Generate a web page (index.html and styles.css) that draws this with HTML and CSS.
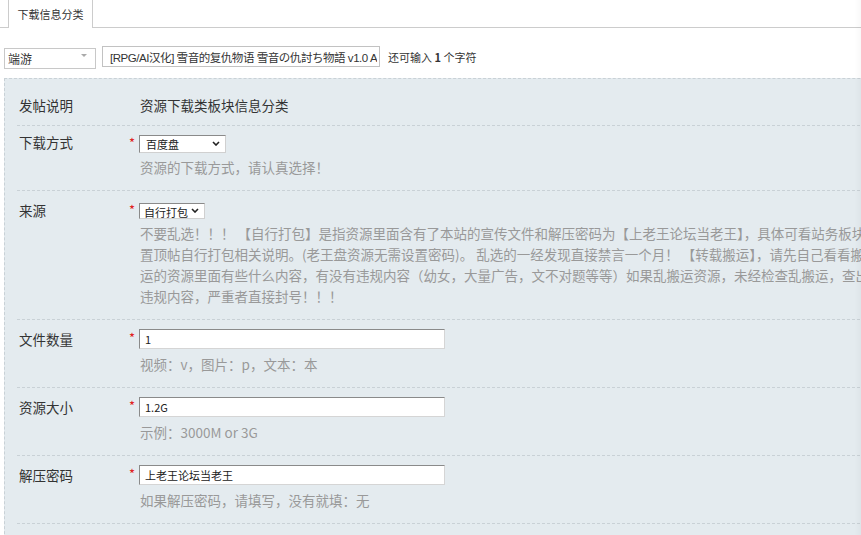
FILE: index.html
```html
<!DOCTYPE html>
<html>
<head>
    <meta charset="UTF-8">
    <meta name="viewport" content="width=device-width, initial-scale=1.0">
    <title>发帖 - 下载信息分类</title>
    <link rel="stylesheet" href="styles.css">
</head>
<body>
    <!-- 标签 -->
    <div class="tabbar">
        <a class="tab">下载信息分类</a>
    </div>

    <!-- 标题 -->
    <div class="subject">
        <span class="combo">
            <select>
                <option>端游</option>
            </select>
        </span>
        <input class="subject-input" type="text" value="[RPG/AI汉化] 雪音的复仇物语 雪音の仇討ち物語 v1.0 A">
        <span class="count">还可输入 <b>1</b> 个字符</span>
    </div>

    <!-- 分类信息 -->
    <div class="sort-panel">
        <div class="row row-intro">
            <div class="label">发帖说明</div>
            <div class="field">资源下载类板块信息分类</div>
        </div>

        <div class="row row-pick">
            <div class="label">下载方式</div>
            <span class="req">*</span>
            <span class="pick pick-md">
                <select><option>百度盘</option></select>
                <svg class="chev" width="8" height="5" viewBox="0 0 8 5"><path d="M1 1l3 3 3-3" fill="none" stroke="#222" stroke-width="1.6"/></svg>
            </span>
            <p class="tip">资源的下载方式，请认真选择！</p>
        </div>

        <div class="row row-pick row-source">
            <div class="label">来源</div>
            <span class="req">*</span>
            <span class="pick pick-sm">
                <select><option>自行打包</option></select>
                <svg class="chev" width="8" height="5" viewBox="0 0 8 5"><path d="M1 1l3 3 3-3" fill="none" stroke="#222" stroke-width="1.6"/></svg>
            </span>
            <p class="tip tip-long">不要乱选！！！ 【自行打包】是指资源里面含有了本站的宣传文件和解压密码为【上老王论坛当老王】，具体可看站务板块<br>置顶帖自行打包相关说明。(老王盘资源无需设置密码)。 乱选的一经发现直接禁言一个月！ 【转载搬运】，请先自己看看搬<br>运的资源里面有些什么内容，有没有违规内容（幼女，大量广告，文不对题等等）如果乱搬运资源，未经检查乱搬运，查出<br>违规内容，严重者直接封号！！！</p>
        </div>

        <div class="row">
            <div class="label">文件数量</div>
            <span class="req">*</span>
            <input class="text" type="text" value="1">
            <p class="tip">视频：v，图片：p，文本：本</p>
        </div>

        <div class="row">
            <div class="label">资源大小</div>
            <span class="req">*</span>
            <input class="text" type="text" value="1.2G">
            <p class="tip">示例：3000M or 3G</p>
        </div>

        <div class="row">
            <div class="label">解压密码</div>
            <span class="req">*</span>
            <input class="text" type="text" value="上老王论坛当老王">
            <p class="tip">如果解压密码，请填写，没有就填：无</p>
        </div>
    </div>

    <div class="edge"></div>
</body>
</html>
```

FILE: styles.css
```css
html,
body {
    overflow: hidden;
}

body {
    margin: 0;
    background-color: #FFF;
    color: #333;
    font-family: "Noto Sans CJK SC", "Noto Sans", sans-serif;
}

select,
input {
    font-family: inherit;
    color: #222;
    outline: none;
}

/* 标签 */

.tabbar {
    display: flex;
    height: 27px;
    padding-left: 8px;
    border-bottom: 1px solid #CCC;
}
.tab {
    box-sizing: border-box;
    width: 85px;
    height: 28px;
    border-left: 1px solid #CCC;
    border-right: 1px solid #CCC;
    background-color: #FFF;
    font-size: 11px;
    line-height: 28px;
    text-align: center;
    color: #333;
}

/* 标题 */

.subject {
    display: flex;
    align-items: center;
    height: 21px;
    margin: 18px 0 0 4px;
}
.combo {
    position: relative;
    display: inline-block;
}
.combo select {
    appearance: none;
    box-sizing: border-box;
    width: 92px;
    height: 21px;
    padding: 0 0 0 3px;
    border: 1px solid #C8C8C8;
    border-radius: 0;
    background-color: #FFF;
    font-size: 12px;
    color: #333;
}
.combo::after {
    content: "";
    position: absolute;
    top: 9px;
    right: 9px;
    border-left: 3px solid transparent;
    border-right: 3px solid transparent;
    border-top: 3px solid #AAA;
}
.subject-input {
    box-sizing: border-box;
    width: 278px;
    height: 21px;
    margin-left: 6px;
    padding: 0 2px 0 7px;
    border: 1px solid #C2C2C2;
    font-family: "Liberation Sans", "Noto Sans CJK SC", sans-serif;
    font-size: 11.5px;
    letter-spacing: -0.45px;
    color: #333;
}
.count {
    margin-left: 8px;
    font-size: 11px;
    color: #333;
}

/* 分类信息 */

.sort-panel {
    width: 1000px;
    margin: 11px 0 0 4px;
    border-top: 1px dashed #C9D1D6;
    border-left: 1px dashed #C9D1D6;
    background-color: #E4EBEF;
    padding-bottom: 40px;
}
.row {
    display: grid;
    grid-template-columns: 110px 10px 1fr;
    margin-left: 12px;
    padding: 9px 0 12px 2px;
    border-bottom: 1px dashed #C9D1D6;
    font-size: 13.5px;
}
.label {
    align-self: center;
    line-height: 20px;
    color: #333;
}
.row-intro {
    padding: 15px 0 9px 2px;
}
.row-intro .label,
.row-intro .field {
    line-height: 22px;
}
.row-intro .field {
    grid-column: 3;
    padding-left: 1px;
}
.req {
    align-self: center;
    margin-top: -3px;
    font-size: 13px;
    line-height: 16px;
    color: #E02020;
}
.tip {
    grid-column: 3;
    margin: 4px 0 0 1px;
    line-height: 22px;
    color: #999;
    white-space: nowrap;
}

/* 下拉 */

.pick {
    position: relative;
    justify-self: start;
}
.pick select {
    appearance: none;
    display: block;
    box-sizing: border-box;
    height: 18px;
    padding: 0 0 0 6px;
    border: 1px solid;
    border-color: #8A8A8A #D0D0D0 #D0D0D0 #8A8A8A;
    border-radius: 0;
    background-color: #FFF;
    font-size: 11px;
}
.pick-md select {
    width: 87px;
}
.pick-sm select {
    width: 66px;
}
.chev {
    position: absolute;
    top: 6px;
    right: 6px;
    pointer-events: none;
}
.row-pick .label {
    line-height: 18px;
    margin-top: -4px;
}
.row-pick .tip {
    margin-top: 3px;
}
.row-source {
    padding-top: 12px;
}
.row-source .label {
    line-height: 16px;
    margin-top: -2px;
}
.row-source .pick select {
    height: 16px;
    padding-left: 4px;
}
.row-source .chev {
    top: 5px;
}
.row-source .tip {
    margin-top: 4px;
    line-height: 21px;
}

/* 输入框 */

.text {
    box-sizing: border-box;
    width: 306px;
    height: 20px;
    padding: 0 5px;
    border: 1px solid;
    border-color: #8A8A8A #D5D5D5 #D5D5D5 #8A8A8A;
    background-color: #FFF;
    font-size: 11px;
}

/* 右侧阴影 */
.edge {
    position: fixed;
    top: 0;
    right: 0;
    width: 7px;
    height: 100%;
    background: linear-gradient(to right, rgb(255 255 255 / 0), rgb(0 0 0 / 0.025));
}
```
